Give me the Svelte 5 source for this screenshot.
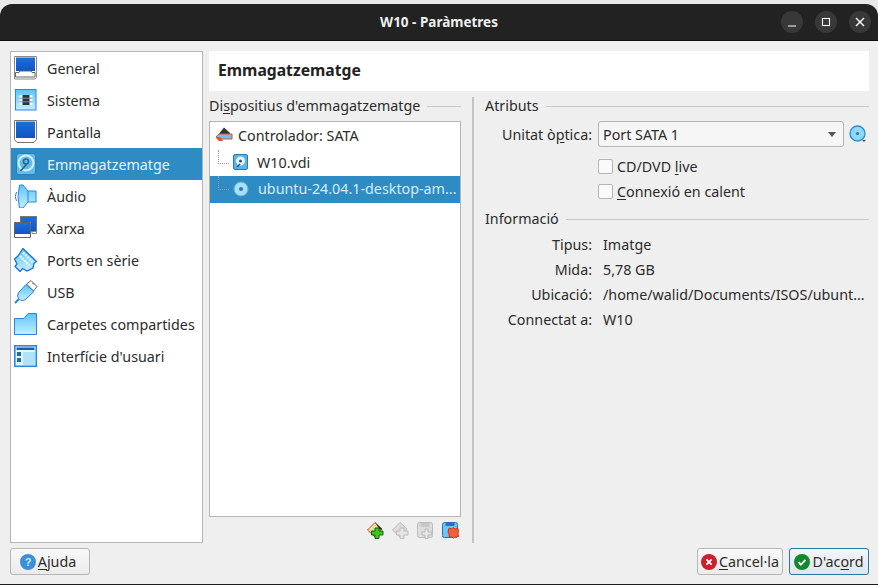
<script>
  const nav = [
    { id: 'general', label: 'General' },
    { id: 'system', label: 'Sistema' },
    { id: 'display', label: 'Pantalla' },
    { id: 'storage', label: 'Emmagatzematge', active: true },
    { id: 'audio', label: 'Àudio' },
    { id: 'network', label: 'Xarxa' },
    { id: 'serial', label: 'Ports en sèrie' },
    { id: 'usb', label: 'USB' },
    { id: 'shared', label: 'Carpetes compartides' },
    { id: 'ui', label: "Interfície d'usuari" }
  ];
  const info = [
    ['Tipus:', 'Imatge'],
    ['Mida:', '5,78 GB'],
    ['Ubicació:', '/home/walid/Documents/ISOS/ubunt…'],
    ['Connectat a:', 'W10']
  ];
</script>

<svg class="defs" width="0" height="0">
  <defs>
    <linearGradient id="pale" x1="0" y1="0" x2="0" y2="1"><stop offset="0" stop-color="#5fc4fb"/><stop offset="1" stop-color="#c4eefe"/></linearGradient>
    <linearGradient id="blue" x1="0" y1="0" x2="0" y2="1"><stop offset="0" stop-color="#1c6fdc"/><stop offset="1" stop-color="#0f55c0"/></linearGradient>
  </defs>
</svg>

<div class="window">
  <header class="titlebar">
    <div class="title">W10 - Paràmetres</div>
    <div class="controls">
      <span class="ctl"><svg width="12" height="12" viewBox="0 0 12 12"><path d="M2 10h8" stroke="#fff" stroke-width="1.2"/></svg></span>
      <span class="ctl"><svg width="12" height="12" viewBox="0 0 12 12"><rect x="2.5" y="2.5" width="7" height="7" fill="none" stroke="#fff" stroke-width="1.1"/></svg></span>
      <span class="ctl"><svg width="12" height="12" viewBox="0 0 12 12"><path d="M2 2l8 8M10 2l-8 8" stroke="#fff" stroke-width="1.4"/></svg></span>
    </div>
  </header>

  <div class="main">
    <nav class="sidebar">
      {#each nav as item}
        <div class="nav-row" class:active={item.active}>
          <svg class="nav-icon" width="24" height="24" viewBox="0 0 24 24">
            {#if item.id === 'general'}
              <path d="M.5.5h22v21l-1.5 1.5H.5z" fill="#fff" stroke="#8a8a8a"/><rect x="2" y="1.5" width="19" height="13.5" fill="url(#blue)"/><path d="M1.5 16.5H5l1-1.500h11l1 1.500h3M1.500 16.500v4.500h19.500v-4.500" fill="none" stroke="#666"/>
            {:else if item.id === 'system'}
              <rect x="1.500" y="1.500" width="20.500" height="20.500" fill="url(#pale)" stroke="#2a86e0"/><rect x="5.500" y="7" width="13" height="10" fill="#eef7fb"/><rect x="8.500" y="7" width="7" height="10" fill="#2c3440"/><path d="M5.500 10.200h13M5.500 13.800h13" stroke="#7a96a8"/>
            {:else if item.id === 'display'}
              <path d="M.5.5h22v19l-2.500 3h-17l-2.500-3z" fill="#fff" stroke="#777"/><rect x="2" y="1.500" width="19" height="16.500" fill="url(#blue)"/>
            {:else if item.id === 'storage'}
              <rect x="2.500" y="1.500" width="19" height="21" rx="2.500" fill="#62bdec" stroke="#2e7fb8"/><circle cx="12" cy="11" r="7.500" fill="none" stroke="#d4f0fc" stroke-width="2"/><circle cx="12" cy="9.500" r="2.500" fill="none" stroke="#2a6490" stroke-width="1.600"/><path d="M6.500 19l6-6.500" stroke="#2a6490" stroke-width="1.800"/>
            {:else if item.id === 'audio'}
              <path d="M5.500 1H9l5 6h8v11h-8l-5 6H5.500Q2.500 12.500 5.500 1z" fill="url(#pale)" stroke="#2a86e0"/><path d="M14 7v11" stroke="#2a86e0"/><path d="M2.500 8Q0 12.500 2.500 17" fill="none" stroke="#2a80c8"/>
            {:else if item.id === 'network'}
              <rect x="6.500" y=".5" width="16" height="15" fill="url(#blue)" stroke="#777"/><path d="M18 15.500h4.500v2H18z" fill="#fff" stroke="#888"/><rect x=".5" y="6.500" width="16" height="12" fill="url(#blue)" stroke="#fff"/><path d="M.5 6.500h16v15H.5z" fill="none" stroke="#666"/><path d="M1 18.500h15v2.500H1z" fill="#fff"/>
            {:else if item.id === 'serial'}
              <path d="M9 .5l13.500 13-2.500 2-1 4.500-6 3-4.500-2.500L6 23.500 1 18.500l2-2.500L.5 11 4 8z" fill="url(#pale)" stroke="#1f72d0" stroke-width="1.300"/><path d="M9 4.500l9.500 9.500M6 8l9.500 9.500" stroke="#f0faff" stroke-width="2.200" stroke-dasharray="2 1"/>
            {:else if item.id === 'usb'}
              <path d="M17 .5l6 6-3.500 4.500-7-7z" fill="#fff" stroke="#666"/><path d="M18.500 3l1.500 1.500" stroke="#444"/><path d="M12 4.500l8 7L12 19c-3 2.500-5.500 1.500-7 0s-2-4 0-7z" fill="url(#pale)" stroke="#2a80d8"/><path d="M5 19l-4 4" stroke="#2a80d8" stroke-width="2"/>
            {:else if item.id === 'shared'}
              <path d="M.5 6.500H10l4-5h8.500v21H.5z" fill="url(#pale)" stroke="#2a86e0"/>
            {:else if item.id === 'ui'}
              <rect x=".8" y="1.800" width="21.500" height="20.500" fill="#e4f6ff" stroke="#2a8ae0" stroke-width="1.600"/><rect x="2.500" y="3.500" width="18" height="2.500" fill="#1e5fa8"/><rect x="3" y="8" width="4" height="4" fill="#1e68c4"/><rect x="3" y="14" width="4" height="4" fill="#1e68c4"/><rect x="9" y="8" width="12" height="13" fill="#aee4fb"/>
            {/if}
          </svg>
          <span>{item.label}</span>
        </div>
      {/each}
    </nav>

    <section class="page">
      <h1>Emmagatzematge</h1>
      <div class="split">
        <div class="devices">
          <div class="legend"><span>Di<u>s</u>positius d'emmagatzematge</span><i></i></div>
          <div class="tree">
            <div class="tree-row ctrl">
              <svg width="18" height="16" viewBox="0 0 18 16"><path d="M9 .5l6 5.500v2H3z" fill="#333"/><path d="M1 10l3-3h13v5H4z" fill="#6cc2f4" stroke="#e04e20"/><path d="M.5 10.500L4 14h4l-3-4z" fill="#e8501c"/></svg>
              <span>Controlador: SATA</span>
            </div>
            <div class="tree-row child">
              <b class="guide"></b>
              <svg width="15" height="16" viewBox="0 0 15 16"><rect x=".5" y=".5" width="14" height="15" rx="1.500" fill="#59b4ea" stroke="#2b78b8"/><circle cx="7.500" cy="7" r="4.500" fill="#e8f7ff"/><circle cx="7.500" cy="7" r="1.500" fill="#235a85"/><path d="M4 13l3-3" stroke="#235a85" stroke-width="1.500"/></svg>
              <span>W10.vdi</span>
            </div>
            <div class="tree-row child selected">
              <b class="guide last"></b>
              <svg width="16" height="16" viewBox="0 0 16 16"><circle cx="8" cy="8" r="7" fill="#a8e0fb" stroke="#5aaedf"/><circle cx="8" cy="8" r="2" fill="#2c78b0"/></svg>
              <span>ubuntu-24.04.1-desktop-am...</span>
            </div>
          </div>
          <div class="tree-tools">
            <svg width="17" height="17" viewBox="0 0 17 17"><path d="M.5 8L8 .5 15 7l-7 8z" fill="#e8e0a0" stroke="#d0482a"/><path d="M8 .5L15 7l-2 1z" fill="#222"/><path d="M8 6h4v3h4v4h-4v3.500H8V13H4.500V9H8z" fill="#3ac61e" stroke="#0c6a10"/></svg>
            <svg width="17" height="17" viewBox="0 0 17 17"><path d="M.5 8L8 .5 15 7l-7 8z" fill="#dcdcdc" stroke="#bbb"/><path d="M8 6h4v3h4v4h-4v3.500H8V13H4.500V9H8z" fill="#e4e4e4" stroke="#bdbdbd"/></svg>
            <svg width="17" height="17" viewBox="0 0 17 17"><rect x=".5" y=".5" width="15" height="15" rx="2" fill="#ddd" stroke="#bbb"/><rect x="3.500" y="1" width="9" height="4" fill="#c8c8c8"/><path d="M8 7h3v3h3.500v3H11v3.500H8V13H5v-3h3z" fill="#e8e8e8" stroke="#bbb"/></svg>
            <svg width="17" height="17" viewBox="0 0 17 17"><rect x=".5" y=".5" width="15" height="15" rx="2" fill="#6cc6f4" stroke="#2a70c0"/><rect x="3.500" y="1" width="9" height="3" fill="#2a70c0"/><path d="M7 6l2.500 1L11 5.500 13 7l3-.5.500 3-.5 2 .5 3-3 .5-2 1-2-1-2.500-.5L7 12l-1-2z" fill="#f0603a" stroke="#c83a18"/></svg>
          </div>
        </div>

        <div class="details">
          <div class="legend"><span>Atributs</span><i></i></div>
          <div class="form-row">
            <label>Unitat ò<u>p</u>tica:</label>
            <div class="select"><span>Port SATA 1</span><em></em></div>
            <svg class="disc" width="18" height="19" viewBox="0 0 18 19"><circle cx="8.500" cy="8.500" r="7.500" fill="#8ed8f8" stroke="#2f90d8" stroke-width="1.400"/><circle cx="8.500" cy="8.500" r="1.600" fill="#2c78b0"/><path d="M13 15h4l-2 2z" fill="#555"/></svg>
          </div>
          <div class="check first"><b></b><span>CD/DVD <u>l</u>ive</span></div>
          <div class="check"><b></b><span><u>C</u>onnexió en calent</span></div>
          <div class="legend info-legend"><span>Informació</span><i></i></div>
          <dl>
            {#each info as [k, v]}
              <dt>{k}</dt><dd>{v}</dd>
            {/each}
          </dl>
        </div>
      </div>
    </section>
  </div>

  <footer>
    <button class="help">
      <svg width="16" height="16" viewBox="0 0 16 16"><circle cx="8" cy="8" r="8" fill="#3d8fd8"/><text x="8" y="12" text-anchor="middle" font-size="11" font-weight="700" fill="#cfe6fa" font-family="Liberation Sans">?</text></svg>
      <span><u>A</u>juda</span>
    </button>
    <div class="spacer"></div>
    <button>
      <svg width="16" height="16" viewBox="0 0 16 16"><circle cx="8" cy="8" r="8" fill="#c8202e"/><path d="M5.400 5.400l5.200 5.200M10.600 5.400l-5.200 5.200" stroke="#fff" stroke-width="1.800"/></svg>
      <span><u>C</u>ancel·la</span>
    </button>
    <button class="primary">
      <svg width="16" height="16" viewBox="0 0 16 16"><circle cx="8" cy="8" r="8" fill="#108a2a"/><path d="M4.500 8.200l2.400 2.400 4.600-4.800" fill="none" stroke="#fff" stroke-width="1.800"/></svg>
      <span>D'ac<u>o</u>rd</span>
    </button>
  </footer>
</div>

<style>
  :global(body) { margin: 0; background: #e6e8ea; }
  .defs { position: absolute; }
  .window {
    margin-top: 4px; width: 878px; height: 581px; display: flex; flex-direction: column;
    background: #efefef; color: #2c2c2c; overflow: hidden; box-sizing: border-box; border-bottom: 1px solid #1c1c1c;
    font-family: "Noto Sans", "Open Sans", sans-serif; font-size: 14.3px;
    border-radius: 12px 12px 0 0;
  }
  .titlebar { height: 37px; background: #222; border-bottom: 1px solid #111; box-sizing: border-box; position: relative; display: flex; align-items: center; justify-content: center; flex: none; }
  .title { color: #f0f0f0; font-weight: 700; font-size: 13.5px; }
  .controls { position: absolute; right: 7px; top: 7px; display: flex; gap: 12px; }
  .ctl { width: 22px; height: 22px; border-radius: 50%; background: #383838; display: flex; align-items: center; justify-content: center; }
  .main { flex: 1; display: flex; gap: 6px; padding: 10px 9px 0 10px; min-height: 0; }
  .sidebar { width: 191px; background: #fff; border: 1px solid #b5b5b5; flex: none; }
  .nav-row { height: 32px; display: flex; align-items: center; gap: 9px; padding-left: 3px; }
  .nav-row.active { background: #2e8bc4; color: #e8f4fb; }
  .nav-icon { flex: none; }
  .page { flex: 1; display: flex; flex-direction: column; min-width: 0; }
  h1 { margin: 0; height: 40px; background: #fff; font-size: 15.700px; font-weight: 700; line-height: 38px; padding-left: 9px; flex: none; color: #222; }
  .split { flex: 1; display: flex; min-height: 0; padding-top: 6px; }
  .devices { width: 252px; flex: none; display: flex; flex-direction: column; padding-right: 11px; border-right: 2px solid #c4c4c4; box-sizing: content-box; }
  .legend { display: flex; align-items: center; gap: 7px; height: 18px; line-height: 18px; white-space: nowrap; }
  .legend i { flex: 1; height: 1px; background: #c8c8c8; }
  .tree { margin-top: 6px; height: 396px; background: #fff; border: 1px solid #b5b5b5; box-sizing: border-box; }
  .tree-row { height: 26px; display: flex; align-items: center; gap: 7px; position: relative; white-space: nowrap; box-sizing: border-box; }
  .ctrl { height: 28px; padding: 0 0 2px 5px; gap: 5px; }
  .child { padding: 0 0 2px 23px; gap: 9px; }
  .selected { background: #2e8bc4; color: #d4ebf8; height: 27px; }
  .guide { position: absolute; left: 8px; top: 0; width: 10px; height: 13px; border-left: 1px dotted #999; border-bottom: 1px dotted #999; }
  .tree-tools { display: flex; justify-content: flex-end; gap: 8px; padding: 5px 2px 0 0; height: 18px; }
  .details { flex: 1; padding-left: 11px; min-width: 0; }
  .form-row { display: flex; align-items: center; margin-top: 6px; height: 26px; }
  label { width: 113px; text-align: right; padding-right: 6px; box-sizing: border-box; flex: none; }
  .select { width: 246px; height: 26px; border: 1px solid #b5b5b5; border-radius: 3px; background: #f6f6f6; box-sizing: border-box; display: flex; align-items: center; justify-content: space-between; padding: 0 7px 0 4px; }
  .select em { width: 0; height: 0; border: 4px solid transparent; border-top: 5px solid #555; border-bottom: 0; }
  .disc { margin-left: 5px; }
  .check { display: flex; align-items: center; gap: 4px; margin-left: 113px; height: 25px; }
  .check.first { margin-top: 7px; }
  .check b { width: 13px; height: 13px; border: 1px solid #b5b5b5; background: #fafafa; border-radius: 2px; }
  .info-legend { margin-top: 6px; }
  dl { display: grid; grid-template-columns: 118px 1fr; margin: 4px 0 0; grid-auto-rows: 25px; align-items: center; }
  dt { text-align: right; padding-right: 11px; }
  dd { margin: 0; white-space: nowrap; overflow: hidden; }
  footer { height: 41px; flex: none; display: flex; align-items: flex-start; gap: 6px; padding: 5px 9px 0 10px; box-sizing: border-box; }
  .spacer { flex: 1; }
  button { width: 86px; height: 27px; border: 1px solid #b5b5b5; border-radius: 3px; background: linear-gradient(#f8f8f8, #ececec); display: flex; align-items: center; justify-content: center; gap: 2px; padding: 0; font: inherit; color: inherit; }
  .help { width: 80px; padding-right: 4px; }
  .primary { width: 80px; border-color: #2a76a8; background: linear-gradient(#f4f6f8, #dfe6ec); }
  u { text-underline-offset: 2px; }
</style>
